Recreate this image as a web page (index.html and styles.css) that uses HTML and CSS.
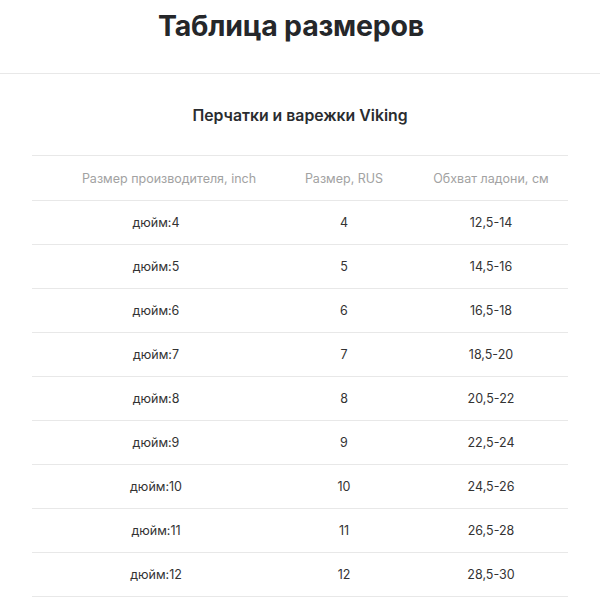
FILE: index.html
```html
<!DOCTYPE html>
<html lang="ru">
<head>
<meta charset="utf-8">
<title>Таблица размеров</title>
<link rel="stylesheet" href="styles.css">
</head>
<body>
<div class="page">
  <header class="top">
    <h1 class="title">Таблица размеров</h1>
  </header>
  <h2 class="subtitle">Перчатки и варежки Viking</h2>
  <div class="table">
    <div class="row head">
      <div class="c1">Размер производителя, inch</div>
      <div class="c2">Размер, RUS</div>
      <div class="c3">Обхват ладони, см</div>
    </div>
    <div class="row"><div class="c1">дюйм:4</div><div class="c2">4</div><div class="c3">12,5-14</div></div>
    <div class="row"><div class="c1">дюйм:5</div><div class="c2">5</div><div class="c3">14,5-16</div></div>
    <div class="row"><div class="c1">дюйм:6</div><div class="c2">6</div><div class="c3">16,5-18</div></div>
    <div class="row"><div class="c1">дюйм:7</div><div class="c2">7</div><div class="c3">18,5-20</div></div>
    <div class="row"><div class="c1">дюйм:8</div><div class="c2">8</div><div class="c3">20,5-22</div></div>
    <div class="row"><div class="c1">дюйм:9</div><div class="c2">9</div><div class="c3">22,5-24</div></div>
    <div class="row"><div class="c1">дюйм:10</div><div class="c2">10</div><div class="c3">24,5-26</div></div>
    <div class="row"><div class="c1">дюйм:11</div><div class="c2">11</div><div class="c3">26,5-28</div></div>
    <div class="row"><div class="c1">дюйм:12</div><div class="c2">12</div><div class="c3">28,5-30</div></div>
  </div>
</div>
</body>
</html>
```
FILE: styles.css
```css
html, body {
  margin: 0;
  padding: 0;
  background: #ffffff;
}
body {
  font-family: Inter, "Noto Sans", sans-serif;
  color: #333333;
}
.page {
  width: 600px;
}
.top {
  border-bottom: 1px solid #e8e8e8;
  padding: 8px 18px 29px 0;
}
.title {
  margin: 0;
  text-align: center;
  font-size: 28.5px;
  line-height: 36px;
  font-weight: 700;
  color: #25272a;
  letter-spacing: -0.2px;
}
.subtitle {
  margin: 32px 0 29px;
  text-align: center;
  font-size: 15.8px;
  line-height: 20px;
  font-weight: 600;
  color: #2a2c2f;
}
.table {
  margin: 0 32px;
  border-top: 1px solid #e8e8e8;
}
.row {
  display: grid;
  grid-template-columns: 274px 76px 186px;
  height: 43px;
  align-items: center;
  border-bottom: 1px solid #e8e8e8;
  font-size: 12.5px;
  color: #333333;
  white-space: nowrap;
}
.row.head {
  height: 44px;
  color: #a2a2a2;
}
.row > div {
  text-align: center;
}
.row .c1 {
  padding-right: 26px;
}
.row.head .c1 {
  padding-right: 0;
}
.row .c2 {
  display: flex;
  justify-content: center;
}
.row .c3 {
  padding-left: 32px;
}
```
